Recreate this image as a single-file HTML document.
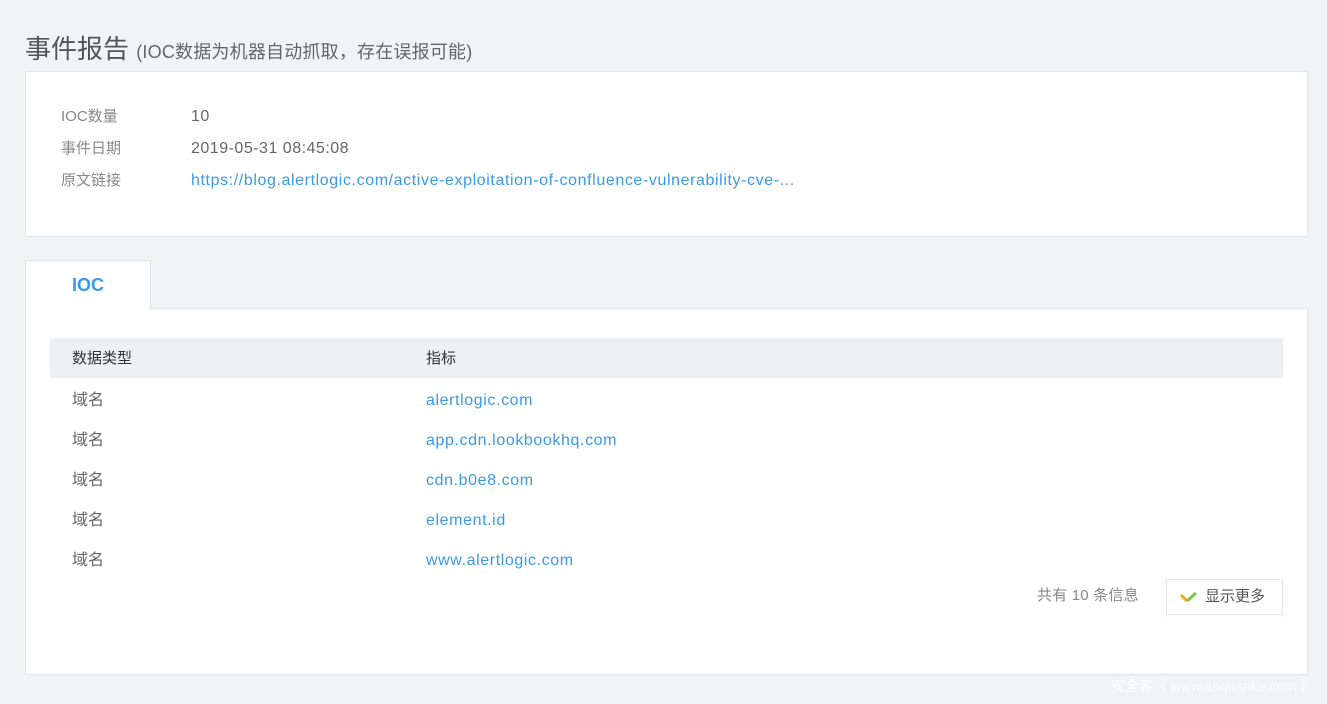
<!DOCTYPE html>
<html><head><meta charset="utf-8"><style>
body{margin:0;width:1327px;height:704px;background:#f2f3f5;font-family:"Liberation Sans","Noto Sans CJK SC",sans-serif;position:relative;overflow:hidden;color:#666}
.abs{position:absolute;line-height:22px;white-space:nowrap}
.title{left:25px;top:34px;font-size:26px;color:#555;line-height:30px}
.title small{font-size:18px;color:#666;letter-spacing:0.2px}
.card1{left:25px;top:71px;width:1281px;height:164px;background:#fff;border:1px solid #e1e6eb}
.l{font-size:15px;color:#888}
.v{font-size:16px;letter-spacing:0.5px;color:#666}
.tab{left:25px;top:260px;width:124px;height:49px;background:#fff;border:1px solid #e1e6eb;border-bottom:none;z-index:2;text-align:center;line-height:48px;font-weight:bold;color:#3a9ae8;font-size:18px}
.card2{left:25px;top:308px;width:1281px;height:365px;background:#fff;border:1px solid #e1e6eb}
.th{left:24px;top:29px;width:1233px;height:40px;background:#eef1f4;font-size:15px;color:#333}
.td{font-size:16px;color:#666}
.lk{font-size:16px;letter-spacing:0.6px;color:#3a9ae8}
</style></head><body>
<div class="abs title">事件报告 <small>(IOC数据为机器自动抓取，存在误报可能)</small></div>
<div class="abs card1">
<div class="abs l" style="left:35px;top:34px">IOC数量</div><div class="abs v" style="left:165px;top:34px">10</div>
<div class="abs l" style="left:35px;top:66px">事件日期</div><div class="abs v" style="left:165px;top:66px">2019-05-31 08:45:08</div>
<div class="abs l" style="left:35px;top:98px">原文链接</div><div class="abs lk" style="left:165px;top:98px">https://blog.alertlogic.com/active-exploitation-of-confluence-vulnerability-cve-...</div>
</div>
<div class="abs tab">IOC</div>
<div class="abs card2">
<div class="abs th"><span class="abs" style="left:22px;top:10px">数据类型</span><span class="abs" style="left:376px;top:10px">指标</span></div>
<div class="abs td" style="left:46px;top:81px">域名</div><div class="abs lk" style="left:400px;top:81px">alertlogic.com</div>
<div class="abs td" style="left:46px;top:121px">域名</div><div class="abs lk" style="left:400px;top:121px">app.cdn.lookbookhq.com</div>
<div class="abs td" style="left:46px;top:161px">域名</div><div class="abs lk" style="left:400px;top:161px">cdn.b0e8.com</div>
<div class="abs td" style="left:46px;top:201px">域名</div><div class="abs lk" style="left:400px;top:201px">element.id</div>
<div class="abs td" style="left:46px;top:241px">域名</div><div class="abs lk" style="left:400px;top:241px">www.alertlogic.com</div>
<div class="abs" style="left:1011px;top:276px;font-size:15px;color:#888;letter-spacing:0.2px">共有 10 条信息</div>
<div class="abs" style="left:1140px;top:270px;width:115px;height:34px;border:1px solid #dce6ee;font-size:15px;color:#555;line-height:33px">
<svg class="abs" style="left:13px;top:11px" width="18" height="12" viewBox="0 0 18 12"><path d="M1 4l6 6" stroke="#f5a623" stroke-width="3" fill="none"/><path d="M7 10l9-8" stroke="#7cc243" stroke-width="3" fill="none"/></svg>
<span class="abs" style="left:38px;line-height:33px">显示更多</span></div>
</div>
<div class="abs" style="left:1111px;top:675px;font-size:14px;color:#fff">安全客（ www.anquanke.com ）</div>
</body></html>
